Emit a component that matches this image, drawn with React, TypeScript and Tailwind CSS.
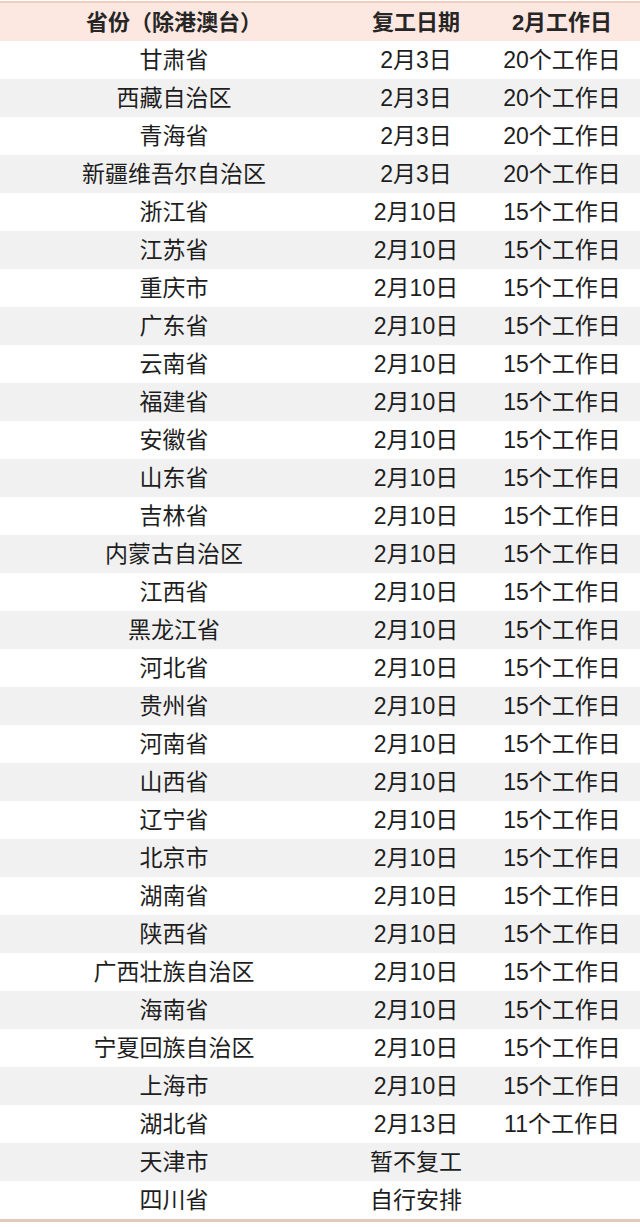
const rows: [string, string, string][] = [
  ['甘肃省', '2月3日', '20个工作日'],
  ['西藏自治区', '2月3日', '20个工作日'],
  ['青海省', '2月3日', '20个工作日'],
  ['新疆维吾尔自治区', '2月3日', '20个工作日'],
  ['浙江省', '2月10日', '15个工作日'],
  ['江苏省', '2月10日', '15个工作日'],
  ['重庆市', '2月10日', '15个工作日'],
  ['广东省', '2月10日', '15个工作日'],
  ['云南省', '2月10日', '15个工作日'],
  ['福建省', '2月10日', '15个工作日'],
  ['安徽省', '2月10日', '15个工作日'],
  ['山东省', '2月10日', '15个工作日'],
  ['吉林省', '2月10日', '15个工作日'],
  ['内蒙古自治区', '2月10日', '15个工作日'],
  ['江西省', '2月10日', '15个工作日'],
  ['黑龙江省', '2月10日', '15个工作日'],
  ['河北省', '2月10日', '15个工作日'],
  ['贵州省', '2月10日', '15个工作日'],
  ['河南省', '2月10日', '15个工作日'],
  ['山西省', '2月10日', '15个工作日'],
  ['辽宁省', '2月10日', '15个工作日'],
  ['北京市', '2月10日', '15个工作日'],
  ['湖南省', '2月10日', '15个工作日'],
  ['陕西省', '2月10日', '15个工作日'],
  ['广西壮族自治区', '2月10日', '15个工作日'],
  ['海南省', '2月10日', '15个工作日'],
  ['宁夏回族自治区', '2月10日', '15个工作日'],
  ['上海市', '2月10日', '15个工作日'],
  ['湖北省', '2月13日', '11个工作日'],
  ['天津市', '暂不复工', ''],
  ['四川省', '自行安排', ''],
]

export default function App() {
  return (
    <div
      className="w-[640px] h-[1227px] bg-white text-[#1e1e1e] pt-[1px]"
      style={{ fontFamily: '"Liberation Sans", "Noto Sans CJK SC", sans-serif' }}
    >
      <div className="border-t-2 border-[#efcdbf] border-b-[3px] border-b-[#e6c8ba]">
        {/* Header */}
        <div className="grid grid-cols-[348px_136px_156px] h-[38px] items-center bg-[#fde8e1] font-bold text-[22px] text-[#262626]">
          <div className="text-center">省份（除港澳台）</div>
          <div className="text-center">复工日期</div>
          <div className="text-center">2月工作日</div>
        </div>

        {rows.map(([province, date, days], i) => (
          <div
            key={province}
            className={`grid grid-cols-[348px_136px_156px] h-[38px] items-center text-[23px] ${
              i % 2 === 1 ? 'bg-[#f1f1f1]' : 'bg-white'
            }`}
          >
            <div className="text-center">{province}</div>
            <div className="text-center">{date}</div>
            <div className="text-center">{days}</div>
          </div>
        ))}
      </div>
    </div>
  )
}
